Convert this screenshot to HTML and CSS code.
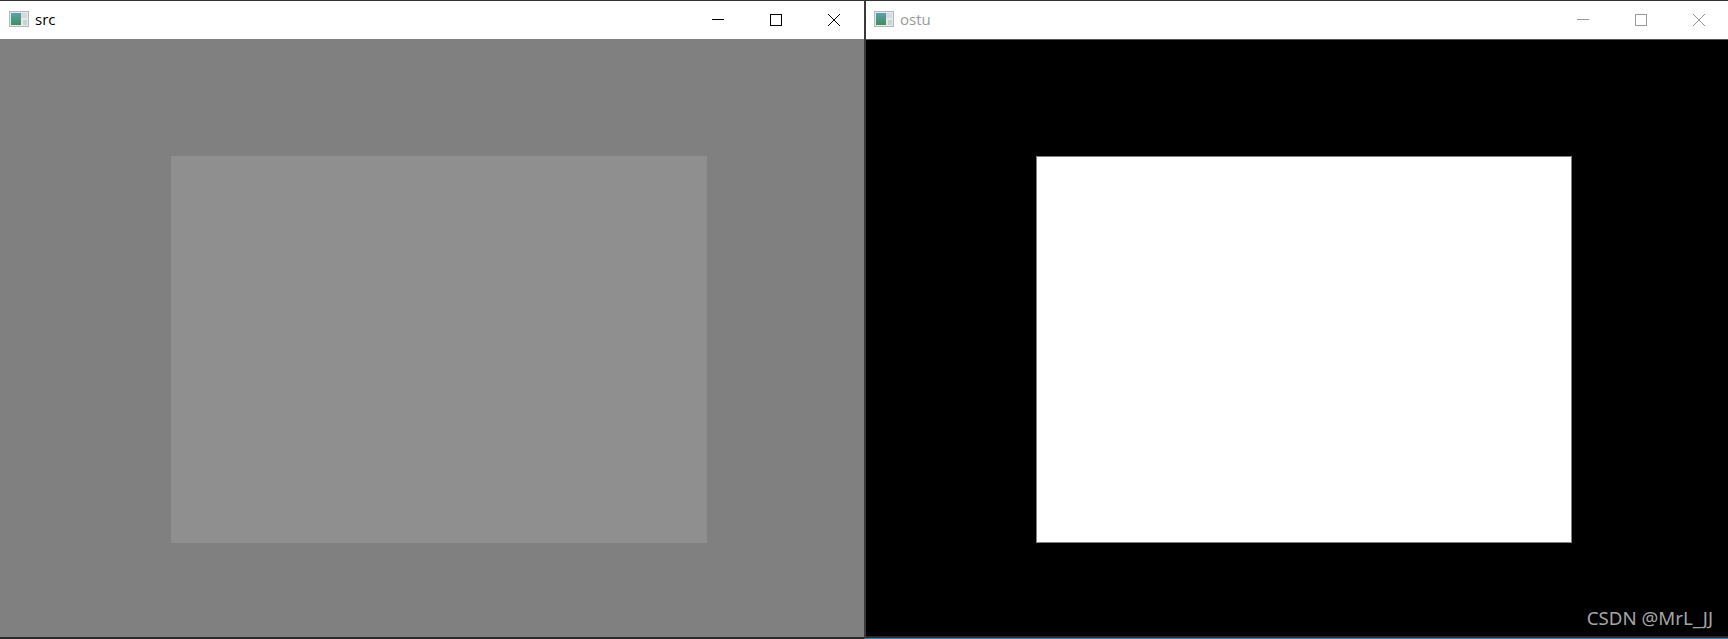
FILE: index.html
```html
<!DOCTYPE html>
<html lang="en">
<head>
    <meta charset="UTF-8">
    <title>src / ostu</title>
    <link rel="stylesheet" href="styles.css">
</head>
<body>
    <div class="window window-src">
        <div class="titlebar">
            <svg class="app-icon" width="20" height="16" viewBox="0 0 20 16">
                <defs>
                    <linearGradient id="pic1" x1="0" y1="0" x2="0" y2="1">
                        <stop offset="0" stop-color="#5f9fb0"/>
                        <stop offset="1" stop-color="#3f8f5a"/>
                    </linearGradient>
                </defs>
                <rect x="0.5" y="0.5" width="19" height="15" fill="#e6e8ea" stroke="#b4b8bc"/>
                <rect x="2" y="2" width="10" height="12" fill="url(#pic1)"/>
                <rect x="12" y="2" width="6" height="5" fill="#d3dde0"/>
                <rect x="14" y="9" width="4" height="5" fill="#c4d6d2"/>
            </svg>
            <span class="title">src</span>
            <div class="controls">
                <svg class="ctl" width="14" height="14" viewBox="0 0 14 14"><path d="M1 6.5H13" stroke="#000" fill="none"/></svg>
                <svg class="ctl" width="14" height="14" viewBox="0 0 14 14"><rect x="1.5" y="1.5" width="11" height="11" stroke="#000" fill="none"/></svg>
                <svg class="ctl" width="14" height="14" viewBox="0 0 14 14"><path d="M1 1L13 13M13 1L1 13" stroke="#000" fill="none"/></svg>
            </div>
        </div>
        <div class="content content-src">
            <div class="rect rect-src"></div>
        </div>
    </div>
    <div class="window window-ostu">
        <div class="titlebar">
            <svg class="app-icon" width="20" height="16" viewBox="0 0 20 16">
                <defs>
                    <linearGradient id="pic2" x1="0" y1="0" x2="0" y2="1">
                        <stop offset="0" stop-color="#5f9fb0"/>
                        <stop offset="1" stop-color="#3f8f5a"/>
                    </linearGradient>
                </defs>
                <rect x="0.5" y="0.5" width="19" height="15" fill="#e6e8ea" stroke="#b4b8bc"/>
                <rect x="2" y="2" width="10" height="12" fill="url(#pic2)"/>
                <rect x="12" y="2" width="6" height="5" fill="#d3dde0"/>
                <rect x="14" y="9" width="4" height="5" fill="#c4d6d2"/>
            </svg>
            <span class="title title-off">ostu</span>
            <div class="controls">
                <svg class="ctl" width="14" height="14" viewBox="0 0 14 14"><path d="M1 6.5H13" stroke="#999" fill="none"/></svg>
                <svg class="ctl" width="14" height="14" viewBox="0 0 14 14"><rect x="1.5" y="1.5" width="11" height="11" stroke="#999" fill="none"/></svg>
                <svg class="ctl" width="14" height="14" viewBox="0 0 14 14"><path d="M1 1L13 13M13 1L1 13" stroke="#999" fill="none"/></svg>
            </div>
        </div>
        <div class="content content-ostu">
            <div class="rect rect-ostu"></div>
            <span class="watermark">CSDN @MrL_JJ</span>
        </div>
    </div>
</body>
</html>
```

FILE: styles.css
```css
html, body {
    margin: 0;
    height: 100%;
    overflow: hidden;
}
body {
    display: flex;
    height: 639px;
    background-color: #2b2b2b;
    font-family: "Open Sans", "Noto Sans", sans-serif;
}
.window {
    display: flex;
    flex-direction: column;
    box-sizing: border-box;
    border-top: 1px solid #333;
}
.window-src {
    width: 864px;
}
.window-ostu {
    flex: 1;
    border-left: 2px solid #3a3a3a;
    border-bottom: 1px solid #3f7fa8;
}
.titlebar {
    display: flex;
    align-items: center;
    box-sizing: border-box;
    height: 38px;
    background-color: #fff;
    padding-left: 9px;
    flex-shrink: 0;
}
.window-ostu .titlebar {
    padding-left: 8px;
    border-bottom: 1px solid #555;
    height: 39px;
}
.app-icon {
    margin-right: 6px;
    margin-bottom: 2px;
}
.title {
    font-size: 15px;
    margin-bottom: 2px;
    color: #000;
}
.title-off {
    color: #999;
}
.controls {
    margin-left: auto;
    display: flex;
    gap: 44px;
    padding-right: 23px;
}
.window-ostu .controls {
    padding-right: 22px;
}
.content {
    flex: 1;
    position: relative;
    box-sizing: border-box;
}
.content-src {
    background-color: #808080;
    padding: 117px 0 0 171px;
    margin-bottom: 2px;
}
.content-ostu {
    background-color: #000;
    padding: 116px 0 0 170px;
    margin-bottom: 2px;
}
.rect {
    width: 536px;
    height: 387px;
}
.rect-src {
    background-color: #8f8f8f;
}
.rect-ostu {
    background-color: #fff;
    box-shadow: 0 0 0 1px #808080 inset;
}
.watermark {
    position: absolute;
    right: 15px;
    bottom: 6px;
    font-family: "Noto Sans", "Open Sans", sans-serif;
    font-size: 18.7px;
    color: #a6a6a6;
}
```
